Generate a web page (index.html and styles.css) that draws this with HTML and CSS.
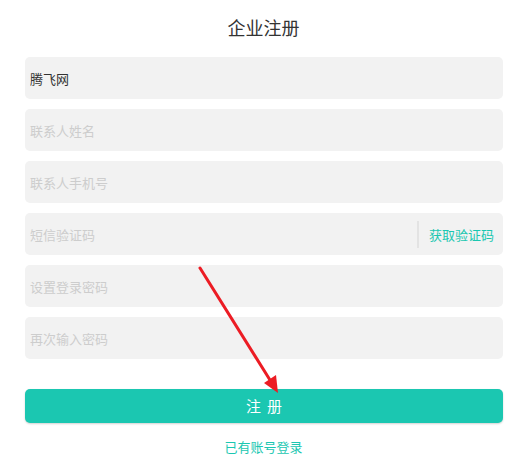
FILE: index.html
```html
<!DOCTYPE html>
<html>
    <head>
        <meta charset="utf-8">
        <title>企业注册</title>
        <meta name="viewport" content="width=device-width">
        <link rel="stylesheet" href="styles.css">
    </head>
    <body>
        <div id="wrapper">
            <div class="header">企业注册</div>

            <div class="form">
                <div class="field">
                    <input class="ipt" type="text" value="腾飞网" placeholder="企业名称">
                </div>
                <div class="field">
                    <input class="ipt" type="text" placeholder="联系人姓名">
                </div>
                <div class="field">
                    <input class="ipt" type="text" placeholder="联系人手机号">
                </div>
                <div class="field">
                    <input class="ipt" type="text" placeholder="短信验证码">
                    <span class="divider"></span>
                    <span class="code-btn">获取验证码</span>
                </div>
                <div class="field">
                    <input class="ipt" type="password" placeholder="设置登录密码">
                </div>
                <div class="field">
                    <input class="ipt" type="password" placeholder="再次输入密码">
                </div>
            </div>

            <div class="submit">注册</div>
            <div class="login-link">已有账号登录</div>

            <!-- annotation arrow -->
            <svg class="arrow" width="527" height="458" viewBox="0 0 527 458">
                <line x1="200" y1="268" x2="270" y2="380" stroke="#ec1c24" stroke-width="3" stroke-linecap="round"/>
                <polygon points="278,393 264,383 276,375" fill="#ec1c24"/>
            </svg>
        </div>
    </body>
</html>
```

FILE: styles.css
```css
body { margin:0; background:#fff; }
#wrapper{
    position: relative;
    width: 527px;
    height: 458px;
    font-family: "Noto Sans CJK SC", "Noto Sans", sans-serif;
    color: #333;
}
.header{
    height: 57px;
    line-height: 54px;
    text-align: center;
    font-size: 18px;
    color: #333;
}
.form{
    padding: 0 24px 0 25px;
}
.field{
    display: flex;
    align-items: center;
    height: 42px;
    margin-bottom: 10px;
    background: #f2f2f2;
    border-radius: 5px;
}
.ipt{
    flex: 1;
    min-width: 0;
    height: 42px;
    padding: 0 5px;
    border: none;
    outline: none;
    background: transparent;
    font-family: inherit;
    font-size: 13px;
    color: #333;
}
.ipt::placeholder{
    color: #cdcdcd;
}
.divider{
    width: 2px;
    height: 27px;
    background: #e3e3e3;
}
.code-btn{
    padding: 0 9px 0 10px;
    font-size: 13px;
    color: #1bc7b1;
}
.submit{
    margin: 30px 24px 0 25px;
    padding-left: 6px;
    height: 34px;
    line-height: 34px;
    border-radius: 5px;
    background: #1bc7b1;
    box-shadow: 0 1px 2px rgba(0,0,0,0.18);
    text-align: center;
    font-size: 15px;
    letter-spacing: 6px;
    color: #fff;
}
.login-link{
    margin-top: 13px;
    text-align: center;
    font-size: 13px;
    line-height: 22px;
    color: #1bc7b1;
}
.arrow{
    position: absolute;
    left: 0;
    top: 0;
    pointer-events: none;
}
```
